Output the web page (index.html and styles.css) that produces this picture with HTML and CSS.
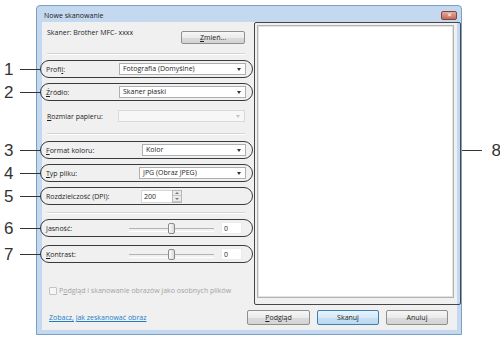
FILE: index.html
```html
<!DOCTYPE html>
<html lang="pl">
<head>
    <meta charset="UTF-8">
    <title>Nowe skanowanie</title>
    <link rel="stylesheet" href="styles.css">
</head>
<body>
    <div class="page">
        <div class="window">
            <div class="titlebar">
                <span class="title">Nowe skanowanie</span>
                <span class="close">✕</span>
            </div>

            <div class="client">
                <div class="main">
                    <div class="form">
                        <div class="scanner-row">
                            <span>Skaner: Brother MFC- xxxx</span>
                            <span class="btn btn-small"><u>Z</u>mień...</span>
                        </div>

                        <div class="sep"></div>

                        <div class="callout row-profile">
                            <div class="mark"><span class="n">1</span><span class="lead"></span></div>
                            <span class="label w71">Profi<u>l</u>:</span>
                            <div class="select w127">Fotografia (Domyślne)</div>
                        </div>

                        <div class="callout row-source">
                            <div class="mark"><span class="n">2</span><span class="lead"></span></div>
                            <span class="label w71"><u>Ź</u>ródło:</span>
                            <div class="select w127">Skaner płaski</div>
                        </div>

                        <div class="plain-row">
                            <span class="label w71"><u>R</u>ozmiar papieru:</span>
                            <div class="select w127 disabled"></div>
                        </div>

                        <div class="sep sep-2"></div>

                        <div class="callout row-color">
                            <div class="mark"><span class="n">3</span><span class="lead"></span></div>
                            <span class="label w94"><u>F</u>ormat koloru:</span>
                            <div class="select w104">Kolor</div>
                        </div>

                        <div class="callout row-type">
                            <div class="mark"><span class="n">4</span><span class="lead"></span></div>
                            <span class="label w91"><u>T</u>yp pliku:</span>
                            <div class="select w107">JPG (Obraz JPEG)</div>
                        </div>

                        <div class="callout row-dpi">
                            <div class="mark"><span class="n">5</span><span class="lead"></span></div>
                            <span class="label w95">Rozdzielczość (DPI):</span>
                            <div class="number-input">200</div>
                            <div class="spinner">
                                <span class="spin spin-up"></span>
                                <span class="spin spin-down"></span>
                            </div>
                        </div>

                        <div class="sep sep-3"></div>

                        <div class="callout row-bright">
                            <div class="mark"><span class="n">6</span><span class="lead"></span></div>
                            <span class="label w83"><u>J</u>asność:</span>
                            <div class="slider"><span class="thumb"></span></div>
                            <div class="value-box">0</div>
                        </div>

                        <div class="callout row-contrast">
                            <div class="mark"><span class="n">7</span><span class="lead"></span></div>
                            <span class="label w83"><u>K</u>ontrast:</span>
                            <div class="slider"><span class="thumb"></span></div>
                            <div class="value-box">0</div>
                        </div>

                        <div class="check-row">
                            <span class="checkbox"></span>
                            <span>P<u>o</u>dgląd i skanowanie obrazów jako osobnych plików</span>
                        </div>
                    </div>

                    <div class="preview-frame">
                        <div class="preview"></div>
                        <div class="mark-right"><span class="lead"></span><span class="n">8</span></div>
                    </div>
                </div>

                <div class="bottom">
                    <a class="link">Zobacz, jak zeskanować obraz</a>
                    <div class="buttons">
                        <span class="btn btn-wide"><u>P</u>odgląd</span>
                        <span class="btn btn-default">Skanuj</span>
                        <span class="btn">Anuluj</span>
                    </div>
                </div>
            </div>
        </div>
    </div>
</body>
</html>
```

FILE: styles.css
```css
* {
    margin: 0;
    padding: 0;
    box-sizing: border-box;
}

body {
    width: 500px;
    height: 346px;
    background: #fff;
    font-family: 'Open Sans', 'Noto Sans', sans-serif;
    font-size: 7px;
    color: #1e1e1e;
    overflow: hidden;
}

u {
    text-decoration: underline;
}

.page {
    padding: 5px 0 0 36px;
}

/* window frame */

.window {
    width: 426px;
    height: 330px;
    background: #c4d9ef;
    border: 1px solid #7c9fc4;
    border-radius: 4px 4px 0 0;
    padding: 0 4px 4px 5px;
    display: flex;
    flex-direction: column;
}

.titlebar {
    height: 16px;
    display: flex;
    justify-content: space-between;
    align-items: flex-start;
    padding-left: 2px;
}

.title {
    padding-top: 5px;
    line-height: 9px;
    color: #222;
}

.close {
    margin-top: 5px;
    width: 16px;
    height: 9px;
    border: 1px solid #7a4a42;
    border-radius: 2px;
    background: linear-gradient(#e6aa9c, #c6685a);
    color: #fff;
    font-size: 6px;
    line-height: 7px;
    text-align: center;
}

.client {
    flex: 1;
    background: #f0f0f0;
    display: flex;
    flex-direction: column;
}

.main {
    display: flex;
    height: 283px;
}

/* left form */

.form {
    width: 212px;
    padding-left: 5px;
    display: flex;
    flex-direction: column;
}

.scanner-row {
    display: flex;
    justify-content: space-between;
    align-items: flex-start;
    padding-top: 6px;
    padding-right: 9px;
    height: 22px;
    line-height: 9px;
}

.sep {
    margin-top: 9px;
    margin-right: 9px;
    height: 2px;
    border-top: 1px solid #d5d5d5;
    border-bottom: 1px solid #fff;
}

.sep-2 {
    margin-top: 11px;
}

.sep-3 {
    margin-top: 7px;
}

.callout {
    position: relative;
    height: 18px;
    margin: 5px 1px 0 -7px;
    padding: 0 6px 0 5px;
    border: 1.5px solid #3a3a3a;
    border-radius: 9px;
    display: flex;
    align-items: center;
}

.row-profile {
    margin-top: 5px;
}

.row-color {
    margin-top: 6px;
}

.row-contrast {
    margin-top: 8px;
}

.plain-row {
    margin-top: 9px;
    height: 12px;
    padding-right: 9px;
    display: flex;
    align-items: center;
}

.label {
    flex: none;
    line-height: 9px;
}

.w71 { width: 71px; }
.w83 { width: 83px; }
.w91 { width: 91px; }
.w94 { width: 94px; }
.w95 { width: 95px; }

.select {
    position: relative;
    margin-left: auto;
    height: 12px;
    padding-left: 3px;
    line-height: 10px;
    background: #fff;
    border: 1px solid #acb0b5;
}

.select::after {
    content: '';
    position: absolute;
    right: 4px;
    top: 4px;
    border-left: 2.5px solid transparent;
    border-right: 2.5px solid transparent;
    border-top: 3px solid #333;
}

.select.disabled {
    border-color: #d9d9d9;
    background: #f7f7f7;
}

.select.disabled::after {
    border-top-color: #c4c4c4;
}

.w104 { width: 104px; }
.w107 { width: 107px; }
.w127 { width: 127px; }

.number-input {
    width: 31px;
    height: 13px;
    padding-left: 2px;
    line-height: 11px;
    background: #fff;
    border: 1px solid #d6d6d6;
    border-right: none;
}

.spinner {
    width: 10px;
    height: 13px;
    display: flex;
    flex-direction: column;
    border: 1px solid #b8b8b8;
    background: #eaeaea;
}

.spin {
    flex: 1;
    position: relative;
    border-bottom: 1px solid #c8c8c8;
}

.spin::after {
    content: '';
    position: absolute;
    left: 2px;
    border-left: 2px solid transparent;
    border-right: 2px solid transparent;
}

.spin-up::after {
    top: 1px;
    border-bottom: 2px solid #6a7a8a;
}

.spin-down::after {
    top: 2px;
    border-top: 2px solid #6a7a8a;
}

.slider {
    position: relative;
    width: 85px;
    height: 11px;
}

.slider::before {
    content: '';
    position: absolute;
    left: 0;
    right: 0;
    top: 5px;
    height: 2px;
    border-top: 1px solid #b3b3b3;
    border-bottom: 1px solid #fff;
}

.thumb {
    position: absolute;
    left: 39px;
    top: 0;
    width: 7px;
    height: 11px;
    border: 1px solid #8b8b8b;
    border-radius: 2px;
    background: linear-gradient(90deg, #fdfdfd, #dadada);
}

.value-box {
    margin-left: 7px;
    width: 21px;
    height: 12px;
    padding-left: 2px;
    line-height: 11px;
    background: #fff;
    border: 1px solid #ececec;
}

.check-row {
    margin-top: 23px;
    padding-left: 2px;
    display: flex;
    align-items: center;
    gap: 2px;
    color: #a3a3a3;
    line-height: 10px;
}

.checkbox {
    width: 8px;
    height: 8px;
    border: 1px solid #c4c4c4;
    border-radius: 1px;
    background: #f6f6f6;
}

/* callout numbers */

.mark {
    position: absolute;
    right: 100%;
    top: 0;
    bottom: 0;
    width: 37px;
    display: flex;
    align-items: center;
}

.n {
    font-family: 'Liberation Sans', Arial, sans-serif;
    font-size: 17px;
    line-height: 17px;
    color: #333;
}

.mark .n {
    width: 16px;
}

.lead {
    flex: 1;
    height: 1px;
    background: #333;
}

/* preview */

.preview-frame {
    position: relative;
    width: 207px;
    margin-right: -4px;
    padding: 2px 6px 6px 2px;
    border: 1.5px solid #474747;
    border-radius: 2px;
}

.preview {
    height: 100%;
    background: #fff;
    border: 1px solid #b4b4b4;
    box-shadow: inset 0 0 0 1px #e2e2e2;
}

.mark-right {
    position: absolute;
    left: calc(100% + 1.5px);
    top: 117px;
    height: 20px;
    display: flex;
    align-items: center;
}

.mark-right .lead {
    flex: none;
    width: 20px;
}

.mark-right .n {
    margin-left: 10px;
}

/* bottom row */

.bottom {
    margin-top: 5px;
    height: 15px;
    padding: 0 9px 0 7px;
    display: flex;
    justify-content: space-between;
    align-items: center;
}

.link {
    color: #1c7cc8;
    text-decoration: underline;
    line-height: 9px;
}

.buttons {
    display: flex;
    gap: 7px;
}

.btn {
    width: 62px;
    height: 15px;
    line-height: 13px;
    text-align: center;
    border: 1px solid #8f8f8f;
    border-radius: 2px;
    background: linear-gradient(#f6f6f6, #ebebeb 50%, #dcdcdc 51%, #d3d3d3);
    color: #1e1e1e;
}

.btn-wide {
    width: 63px;
}

.btn-small {
    width: 64px;
    height: 13px;
    line-height: 11px;
    margin-top: 3px;
}

.btn-default {
    border-color: #3c7fb1;
    background: linear-gradient(#e8f3fc, #d6e9f8 50%, #c4e0f6 51%, #bcd9f0);
}
```
